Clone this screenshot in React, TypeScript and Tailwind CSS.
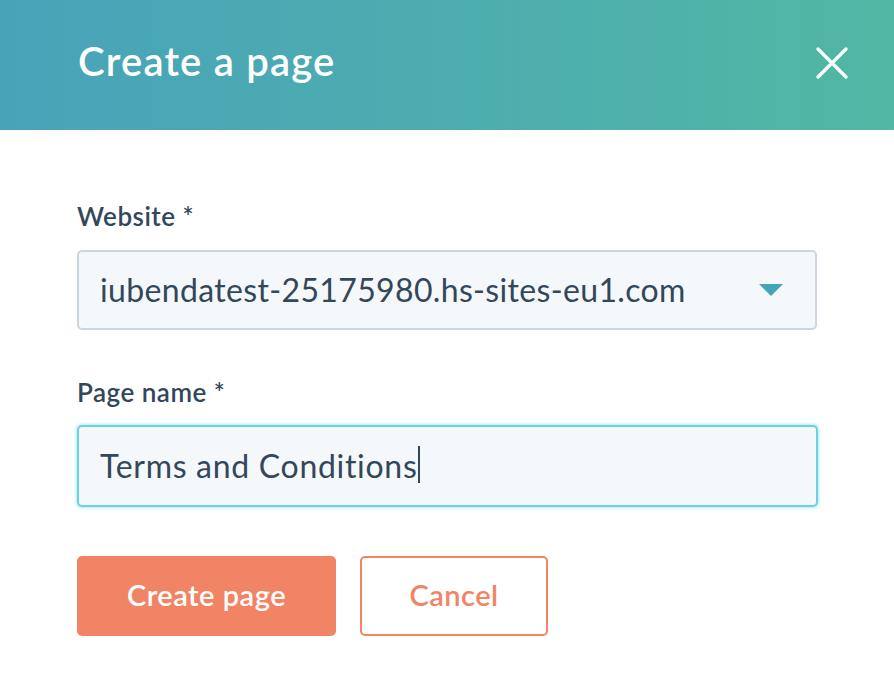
import React from "react";

export default function App() {
  const font = { fontFamily: "Lato, 'Noto Sans', sans-serif" };
  return (
    <div className="w-[894px] h-[678px] bg-white overflow-hidden" style={font}>
      <div className="h-[130px] flex items-center justify-between pl-[78px] pr-[46px] bg-gradient-to-r from-[#48a3b9] to-[#52b7a4]">
        <h1 className="text-white text-[40px] font-semibold leading-none tracking-[1.2px] pb-[9px]">Create a page</h1>
        <svg width="32" height="32" viewBox="0 0 32 32" className="mb-[5px]">
          <path d="M2 2 L30 30 M30 2 L2 30" stroke="white" strokeWidth="3.2" strokeLinecap="round" />
        </svg>
      </div>
      <div className="px-[77px] pt-[73px]">
        <div className="text-[#33475b] text-[26px] font-semibold leading-none tracking-[0.5px]">Website *</div>
        <div className="mt-[21px] h-[80px] w-[740px] rounded-[5px] border-2 border-[#cbd6e2] bg-[#f5f8fa] flex items-center justify-between pl-[21px] pr-[32px]">
          <span className="text-[#33475b] text-[32px] leading-none tracking-[0.35px]">iubendatest-25175980.hs-sites-eu1.com</span>
          <svg width="24" height="12" viewBox="0 0 24 12">
            <path d="M0 0 L24 0 L12 12 Z" fill="#45a4ba" />
          </svg>
        </div>
        <div className="mt-[49px] text-[#33475b] text-[26px] font-semibold leading-none tracking-[0.5px]">Page name *</div>
        <div className="mt-[20px] h-[82px] w-[741px] rounded-[5px] border-2 border-[#6fd0e0] shadow-[0_0_3px_1px_rgba(0,208,228,0.35)] bg-[#f5f8fa] flex items-center pl-[21px]">
          <span className="text-[#33475b] text-[32px] leading-none tracking-[0.7px]">Terms and Conditions</span>
          <span className="inline-block w-[2px] h-[37px] bg-[#33475b] ml-[1px] mb-[3px]" />
        </div>
        <div className="mt-[49px] flex gap-[24px]">
          <button className="h-[80px] w-[259px] rounded-[5px] bg-[#f28466] text-white text-[29px] font-semibold leading-none tracking-[0.5px] pb-[4px]">Create page</button>
          <button className="h-[80px] w-[188px] rounded-[5px] border-2 border-[#f28466] bg-white text-[#f28466] text-[29px] font-semibold leading-none tracking-[0.5px] pb-[4px]">Cancel</button>
        </div>
      </div>
    </div>
  );
}
